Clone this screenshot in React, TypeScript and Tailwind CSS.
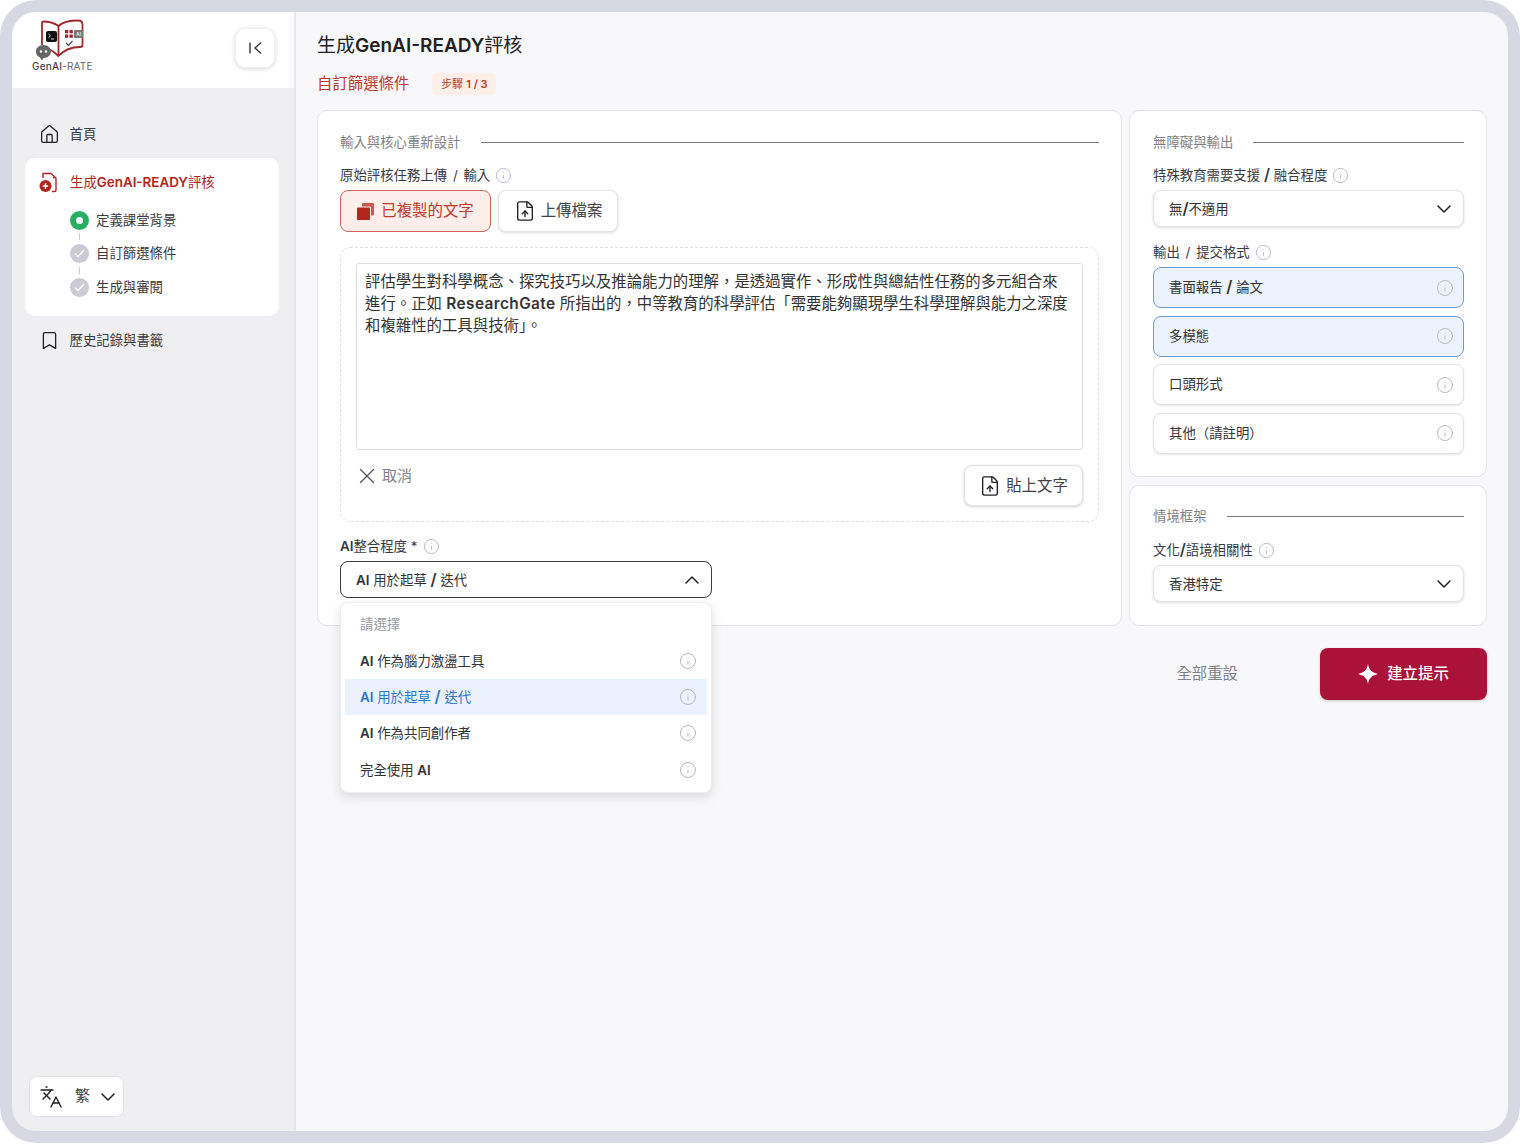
import type { ReactNode } from "react";
import { Bookmark, ChevronDown, ChevronUp, FileUp, House, Info, Languages, X } from "lucide-react";

const font = "font-['Inter','Noto_Sans_CJK_TC',sans-serif]";

function Logo() {
  return (
    <div className="flex w-[60px] flex-col items-start">
      <svg width="52" height="42" viewBox="0 0 52 42" fill="none" aria-hidden="true" className="ml-[2px]">
        <path d="M8 26V4c0-1 .5-1.500 1.500-1.500C15 2.500 20 4 24.500 7 28 3.500 34 1.500 44 1.500c3 0 4.500 1.500 4.500 4V26c0 1.500-1 2-2.500 2-8 0-15 2-21.500 9-4-4-8-6.500-12-8" stroke="#a3262c" strokeWidth="1.800" />
        <path d="M24.500 7v30" stroke="#a3262c" strokeWidth="1.800" />
        <rect x="12" y="12" width="11" height="11" rx="2" fill="#111" />
        <path d="M14.500 15l2 1.800-2 1.800M17 20h3" stroke="#fff" strokeWidth="0.800" />
        <rect x="31" y="11" width="3.300" height="3.300" fill="#a3262c" />
        <rect x="35.500" y="11" width="3.300" height="3.300" fill="#a3262c" />
        <rect x="31" y="15.500" width="3.300" height="3.300" fill="#a3262c" />
        <rect x="35.500" y="15.500" width="3.300" height="3.300" fill="#a3262c" />
        <rect x="40" y="11" width="9" height="8" rx="1" fill="#777" />
        <text x="44.500" y="17" textAnchor="middle" fontSize="5" fontWeight="700" fill="#ddd">AI</text>
        <path d="M32 24l2.500 2.500 4-4.500" stroke="#444" strokeWidth="1.200" />
        <path d="M6 38.500C3.500 37.500 2 35.200 2 32.500 2 28.900 5.300 26 9.500 26s7.500 2.900 7.500 6.500S13.700 39 9.500 39L8 41.500z" fill="#666" />
        <circle cx="7" cy="32.500" r="1.300" fill="#fff" />
        <circle cx="12" cy="32.500" r="1.300" fill="#fff" />
      </svg>
      <span className="text-[10px] leading-[10px] font-medium tracking-[0.2px] whitespace-nowrap text-[#444]">
        GenAI<span className="font-normal text-[#666]">-RATE</span>
      </span>
    </div>
  );
}

function DocPlus() {
  return (
    <svg width="20" height="22" viewBox="0 0 20 22" fill="none" aria-hidden="true">
      <path d="M4 7V2.500h8l5 4.500v12a1.500 1.500 0 0 1-1.500 1.500H13" stroke="#b3261e" strokeWidth="1.400" />
      <path d="M13.500 6.500l1.500-1 1 1-1 1.500z" fill="#b3261e" />
      <circle cx="6.500" cy="15" r="6" fill="#b3261e" />
      <path d="M3.800 15h5.400M6.500 12.300v5.400" stroke="#fff" strokeWidth="1.500" />
    </svg>
  );
}

function CopyFill() {
  return (
    <svg width="17" height="17" viewBox="0 0 17 17" aria-hidden="true" className="shrink-0">
      <path d="M5 3.500V1.200C5 .5 5.500 0 6.200 0h9.600C16.500 0 17 .5 17 1.200v10.100c0 .7-.5 1.200-1.200 1.200H14V5c0-.8-.7-1.500-1.500-1.500z" fill="#c9594f" />
      <rect x="0" y="4.500" width="13" height="12.500" rx="1" fill="#b3261e" />
    </svg>
  );
}

function Sparkle() {
  return (
    <svg width="20" height="20" viewBox="0 0 20 20" fill="#fff" aria-hidden="true">
      <path d="M10 0c1 5.500 3.500 8.500 10 10-6.500 1.500-9 4.500-10 10-1-5.500-3.500-8.500-10-10 6.500-1.500 9-4.500 10-10z" />
    </svg>
  );
}

function Slash() {
  return <span className="text-[16px] leading-[0] font-semibold">/</span>;
}

function SectionTitle({ title }: { title: string }) {
  return (
    <div className="flex h-[20px] items-center gap-5">
      <span className="text-[13.400px] whitespace-nowrap text-[#7f7f8a]">{title}</span>
      <div className="h-px flex-1 bg-[#77777f]" />
    </div>
  );
}

function Label({ text, className = "" }: { text: ReactNode; className?: string }) {
  return (
    <div className={`flex h-[20px] items-center gap-[5px] text-[13.400px] text-[#3a3a3f] ${className}`}>
      <span className="whitespace-nowrap">{text}</span>
      <Info size={17} strokeWidth={1.3} className="text-[#b4b4c4]" />
    </div>
  );
}

function SelectBox({ value }: { value: ReactNode }) {
  return (
    <div className="mt-[5px] flex h-[37px] items-center justify-between rounded-lg border border-[#e2e2e8] bg-white pr-[7px] pl-[15px] text-[13.400px] text-[#333] shadow-[0_1px_3px_rgba(0,0,0,0.14)]">
      <span className="pt-[1px]">{value}</span>
      <ChevronDown size={24} strokeWidth={1.5} className="text-[#222]" />
    </div>
  );
}

function FormatOption({ text, active }: { text: ReactNode; active?: boolean }) {
  return (
    <div
      className={`flex h-[41px] items-center justify-between rounded-lg border pr-[9px] pl-[15px] text-[13.400px] text-[#333] ${
        active ? "border-[#6a9be0] bg-[#edf3fd]" : "border-[#e2e2e8] bg-white shadow-[0_1px_2px_rgba(0,0,0,0.1)]"
      }`}
    >
      <span>{text}</span>
      <Info size={18} strokeWidth={1.3} className="text-[#b4b4c4]" />
    </div>
  );
}

function MenuRow({ text, active }: { text: ReactNode; active?: boolean }) {
  return (
    <div
      className={`flex h-[36.400px] items-center justify-between pr-[10px] pl-[15px] text-[13.400px] ${
        active ? "bg-[#ebf2fd] text-[#2f76d2]" : "text-[#333]"
      }`}
    >
      <span>{text}</span>
      <Info size={18} strokeWidth={1.3} className="text-[#b4b4c4]" />
    </div>
  );
}

function StepRow({ text, done }: { text: string; done?: boolean }) {
  return (
    <div className="flex h-[20px] items-center gap-[7px]">
      {done ? (
        <span className="flex size-[19px] items-center justify-center rounded-full bg-[#cbcbd6]">
          <svg width="11" height="9" viewBox="0 0 11 9" fill="none" aria-hidden="true">
            <path d="M1 4.500l3 3 6-6.500" stroke="#fff" strokeWidth="1.300" />
          </svg>
        </span>
      ) : (
        <span className="flex size-[19px] items-center justify-center rounded-full bg-[#27ae60]">
          <span className="size-[7px] rounded-full bg-white" />
        </span>
      )}
      <span className="text-[13.400px] text-[#3a3a3f]">{text}</span>
    </div>
  );
}

function Sidebar() {
  return (
    <aside className="flex w-[284px] shrink-0 flex-col border-r-2 border-[#e6e6ea] bg-[#efeff2]">
      <div className="flex h-[76px] items-start justify-between bg-white pt-[7px] pr-[19px] pl-[20px]">
        <Logo />
        <button className="mt-[9px] flex size-[40px] items-center justify-center rounded-[10px] border border-[#eeeef2] bg-white shadow-[0_1px_4px_rgba(0,0,0,0.16)]">
          <svg width="15" height="14" viewBox="0 0 15 14" fill="none" aria-hidden="true">
            <path d="M2 1.500v11M13 1.500L7 7l6 5.500" stroke="#333" strokeWidth="1.400" />
          </svg>
        </button>
      </div>
      <nav className="mt-[34px] flex flex-1 flex-col pr-[15px] pl-[13px]">
        <div className="flex h-[24px] items-center gap-[10px] pl-[13.500px]">
          <House size={21} strokeWidth={1.5} className="text-[#222]" />
          <span className="text-[13.400px] text-[#3a3a3f]">首頁</span>
        </div>
        <div className="mt-[12px] h-[158px] rounded-[10px] bg-white pt-[14px] pl-[14px]">
          <div className="flex h-[20px] items-center gap-[11px]">
            <DocPlus />
            <span className="text-[13.400px] text-[#b3261e]">
              生成<span className="font-semibold">GenAI-READY</span>評核
            </span>
          </div>
          <div className="mt-[18px] flex flex-col pl-[31px]">
            <StepRow text="定義課堂背景" />
            <div className="my-[3.250px] ml-[9px] h-[7px] w-px bg-[#cbcbd6]" />
            <StepRow text="自訂篩選條件" done />
            <div className="my-[3.250px] ml-[9px] h-[7px] w-px bg-[#cbcbd6]" />
            <StepRow text="生成與審閱" done />
          </div>
        </div>
        <div className="mt-[12px] flex h-[24px] items-center gap-[10px] pl-[13.500px]">
          <Bookmark size={21} strokeWidth={1.5} className="text-[#222]" />
          <span className="text-[13.400px] text-[#3a3a3f]">歷史記錄與書籤</span>
        </div>
        <div className="mt-auto mb-[14px] ml-[4px] flex h-[41px] w-[95px] items-center rounded-lg border border-[#e2e2e8] bg-white pr-[3px] pl-[9px]">
          <Languages size={24} strokeWidth={1.4} className="text-[#222]" />
          <span className="ml-[12px] text-[15px] text-[#444]">繁</span>
          <ChevronDown size={24} strokeWidth={1.5} className="ml-auto text-[#222]" />
        </div>
      </nav>
    </aside>
  );
}

export default function App() {
  return (
    <div className={`h-[1144px] w-[1520px] overflow-hidden bg-white ${font}`}>
      <div className="h-[1143px] rounded-[36px] bg-[#d8d8e2] p-3">
        <div className="flex h-full overflow-hidden rounded-[24px]">
          <Sidebar />
          <main className="flex-1 bg-[#f8f8fb] px-[21px]">
            <h1 className="mt-[22px] flex h-[24px] items-center text-[19px] font-normal whitespace-nowrap text-[#222]">
              生成<span className="font-semibold">GenAI-READY</span>評核
            </h1>
            <div className="mt-[14px] flex h-[24px] items-center">
              <span className="text-[15.400px] text-[#c0392b]">自訂篩選條件</span>
              <span className="ml-[23px] flex h-[22px] w-[64px] items-center justify-center rounded-[5px] bg-[#fdeeea] text-[11px] text-[#c0392b]">
                步驟&nbsp;<b className="font-semibold">1 / 3</b>
              </span>
            </div>

            <div className="mt-[14px] flex gap-[7px]">
              <section className="relative h-[516px] w-[805px] rounded-[10px] border border-[#e2e2e8] bg-white px-[22px] pt-[21px]">
                <SectionTitle title="輸入與核心重新設計" />
                <Label text="原始評核任務上傳 / 輸入" className="mt-[13px] [word-spacing:2px]" />
                <div className="mt-[5px] flex gap-[7px]">
                  <button className="flex h-[42px] w-[151px] items-center justify-center gap-[7px] rounded-lg border border-[#d0635a] bg-[#fdeeea] text-[15.400px] text-[#c0392b]">
                    <CopyFill />
                    已複製的文字
                  </button>
                  <button className="flex h-[42px] w-[120px] items-center justify-center gap-[5px] rounded-lg border border-[#e2e2e8] bg-white text-[15.400px] text-[#444] shadow-[0_1px_3px_rgba(0,0,0,0.14)]">
                    <FileUp size={22} strokeWidth={1.5} className="text-[#222]" />
                    上傳檔案
                  </button>
                </div>
                <div className="mt-[15px] h-[275px] rounded-[10px] border border-dashed border-[#dedee4] px-[15px] pt-[15px]">
                  <div className="h-[187px] rounded-[3px] border border-[#dcdce4] pt-[7px] pr-[10px] pl-[8px] text-[15.400px] leading-[22px] text-[#333]">
                    {"評估學生對科學概念、探究技巧以及推論能力的理解\uFF0C是透過實作、形成性與總結性任務的多元組合來進行。正如 "}
                    <b className="font-semibold tracking-[0.4px]">ResearchGate</b>
                    {" 所指出的\uFF0C中等教育的科學評估「需要能夠顯現學生科學理解與能力之深度和複雜性的工具與技術」。"}
                  </div>
                  <div className="flex items-start justify-between">
                    <div className="mt-[16px] -ml-[2px] flex h-[20px] items-center gap-[2px] text-[15px] text-[#7f7f8a]">
                      <X size={26} strokeWidth={1.2} className="text-[#555]" />
                      取消
                    </div>
                    <button className="mt-[15px] flex h-[41px] w-[119px] items-center justify-center gap-[5px] rounded-lg border border-[#e2e2e8] bg-white text-[15.400px] text-[#444] shadow-[0_1px_3px_rgba(0,0,0,0.18)]">
                      <FileUp size={22} strokeWidth={1.5} className="text-[#222]" />
                      貼上文字
                    </button>
                  </div>
                </div>
                <Label text={<><b className="font-semibold">AI</b>整合程度 *</>} className="mt-[14px]" />
                <div className="mt-[5px] flex h-[37px] w-[372px] items-center justify-between rounded-lg border border-[#3a3a3f] bg-white pr-[7px] pl-[15px] text-[13.400px] text-[#333]">
                  <span className="pt-[1px]"><b className="font-semibold">AI</b> 用於起草 <Slash /> 迭代</span>
                  <ChevronUp size={24} strokeWidth={1.5} className="text-[#222]" />
                </div>
                <div className="absolute top-[491px] left-[22px] z-10 h-[191px] w-[372px] overflow-hidden rounded-lg border border-[#ececf0] bg-white px-[4px] pt-[3px] shadow-[0_4px_12px_rgba(0,0,0,0.12)]">
                  <div className="flex h-[36.400px] items-center pl-[15px] text-[13.400px] text-[#9a9aa4]">請選擇</div>
                  <MenuRow text={<><b className="font-semibold">AI</b> 作為腦力激盪工具</>} />
                  <MenuRow text={<><b className="font-semibold">AI</b> 用於起草 <Slash /> 迭代</>} active />
                  <MenuRow text={<><b className="font-semibold">AI</b> 作為共同創作者</>} />
                  <MenuRow text={<>完全使用 <b className="font-semibold">AI</b></>} />
                </div>
              </section>

              <div className="flex w-[358px] flex-col gap-[8px]">
                <section className="h-[367px] rounded-[10px] border border-[#e2e2e8] bg-white pt-[21px] pr-[22px] pl-[23px]">
                  <SectionTitle title="無障礙與輸出" />
                  <Label text={<>特殊教育需要支援 <Slash /> 融合程度</>} className="mt-[13px]" />
                  <SelectBox value={<>無<Slash />不適用</>} />
                  <Label text="輸出 / 提交格式" className="mt-[15px] [word-spacing:2px]" />
                  <div className="mt-[5px] flex flex-col gap-[7.500px]">
                    <FormatOption text={<>書面報告 <Slash /> 論文</>} active />
                    <FormatOption text="多模態" active />
                    <FormatOption text="口頭形式" />
                    <FormatOption text={"其他\uFF08請註明\uFF09"} />
                  </div>
                </section>
                <section className="h-[141px] rounded-[10px] border border-[#e2e2e8] bg-white pt-[20px] pr-[22px] pl-[23px]">
                  <SectionTitle title="情境框架" />
                  <Label text={<>文化<Slash />語境相關性</>} className="mt-[14px]" />
                  <SelectBox value="香港特定" />
                </section>
                <div className="mt-[14px] flex items-center justify-end">
                  <span className="mr-[82px] text-[15.400px] text-[#7f7f8a]">全部重設</span>
                  <button className="flex h-[52px] w-[167px] items-center justify-center gap-[9px] rounded-lg bg-[#aa1239] text-[15.400px] font-medium text-white shadow-[0_1px_3px_rgba(0,0,0,0.2)]">
                    <Sparkle />
                    建立提示
                  </button>
                </div>
              </div>
            </div>
          </main>
        </div>
      </div>
    </div>
  );
}
